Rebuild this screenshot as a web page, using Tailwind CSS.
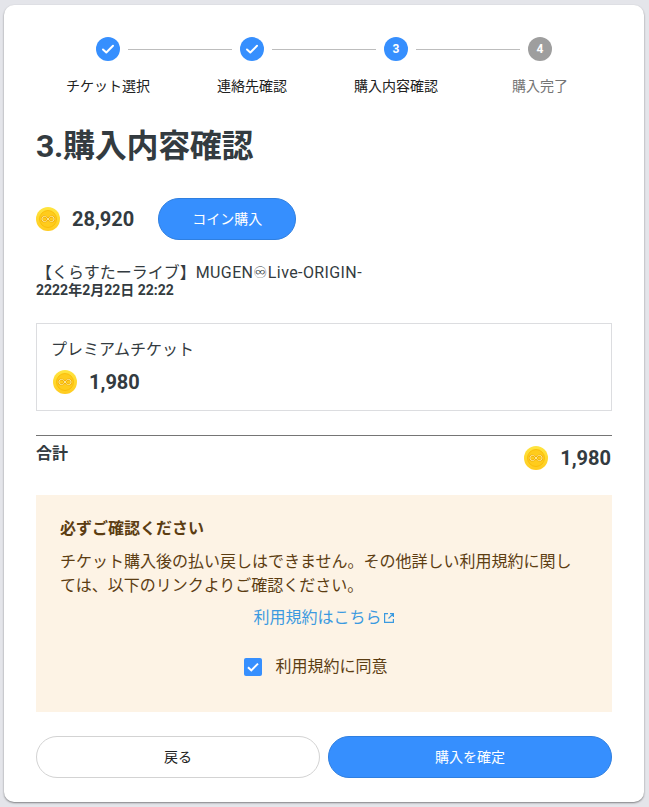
<!DOCTYPE html>
<html lang="ja">
<head>
    <meta charset="UTF-8">
    <meta name="viewport" content="width=device-width, initial-scale=1.0">
    <title>購入内容確認</title>
    <script src="https://cdn.jsdelivr.net/npm/@tailwindcss/browser@4"></script>
</head>
<body class="bg-[#e4e5ea] h-[807px] overflow-hidden font-['Roboto','Noto_Sans_CJK_JP',sans-serif] text-[#333b40]">
    <svg class="absolute w-0 h-0">
        <defs>
            <linearGradient id="coinFace" x1="0" y1="0" x2="0" y2="1">
                <stop offset="0" stop-color="#ffe540"/>
                <stop offset="1" stop-color="#ffcb1f"/>
            </linearGradient>
        </defs>
        <symbol id="coin" viewBox="0 0 24 24">
            <circle cx="12" cy="12" r="12" fill="url(#coinFace)"/>
            <circle cx="12" cy="12" r="8.500" fill="#ffcc1c" stroke="#f7b500" stroke-width=".7"/>
            <path d="M12 12c-1.200-1.700-2.200-2.600-3.500-2.600a2.600 2.600 0 0 0 0 5.200c1.300 0 2.300-.9 3.500-2.600s2.200-2.600 3.500-2.600a2.600 2.600 0 0 1 0 5.200c-1.300 0-2.300-.9-3.500-2.600z" fill="none" stroke="#eea900" stroke-width="2"/>
            <path d="M12 12c-1.200-1.700-2.200-2.600-3.500-2.600a2.600 2.600 0 0 0 0 5.200c1.300 0 2.300-.9 3.500-2.600s2.200-2.600 3.500-2.600a2.600 2.600 0 0 1 0 5.200c-1.300 0-2.300-.9-3.500-2.600z" fill="none" stroke="#ffec9e" stroke-width="1"/>
        </symbol>
    </svg>

    <div class="absolute left-[4px] top-[5px] w-[640px] h-[797px] bg-white rounded-[10px] shadow-[0_1px_2px_rgba(0,0,0,0.45)] px-[32px] pt-[32px]">
        <!-- Stepper -->
        <div class="flex items-center mx-[60px]">
            <div class="w-6 h-6 rounded-full bg-[#368ffe] flex items-center justify-center">
                <svg class="w-[14px] h-[14px]" viewBox="0 0 14 14" fill="none" stroke="#fff" stroke-width="2" stroke-linecap="round" stroke-linejoin="round"><path d="M2 7.500l3.300 3L12 3.800"/></svg>
            </div>
            <div class="flex-1 h-px bg-[#bdbdbd] mx-2"></div>
            <div class="w-6 h-6 rounded-full bg-[#368ffe] flex items-center justify-center">
                <svg class="w-[14px] h-[14px]" viewBox="0 0 14 14" fill="none" stroke="#fff" stroke-width="2" stroke-linecap="round" stroke-linejoin="round"><path d="M2 7.500l3.300 3L12 3.800"/></svg>
            </div>
            <div class="flex-1 h-px bg-[#bdbdbd] mx-2"></div>
            <div class="w-6 h-6 rounded-full bg-[#368ffe] flex items-center justify-center text-white text-xs font-bold">3</div>
            <div class="flex-1 h-px bg-[#bdbdbd] mx-2"></div>
            <div class="w-6 h-6 rounded-full bg-[#9e9e9e] flex items-center justify-center text-white text-xs font-bold">4</div>
        </div>
        <div class="grid grid-cols-4 text-center text-sm leading-5 mt-[15px] text-[#212121]">
            <div>チケット選択</div>
            <div>連絡先確認</div>
            <div>購入内容確認</div>
            <div class="text-[#757575]">購入完了</div>
        </div>

        <h1 class="text-[32px] leading-[40px] font-bold tracking-[-0.3px] mt-[30px]">3.購入内容確認</h1>

        <!-- Coin balance -->
        <div class="flex items-center mt-[32px] h-[42px]">
            <svg class="w-6 h-6"><use href="#coin"/></svg>
            <span class="text-xl font-bold ml-3">28,920</span>
            <button class="ml-6 w-[138px] h-[42px] rounded-full bg-[#368ffe] border border-[#2f7fe0] text-white text-sm">コイン購入</button>
        </div>

        <!-- Event -->
        <p class="text-base leading-5 mt-[23px]">【くらすたーライブ】<span class="tracking-[0.4px]">MUGEN♾Live-ORIGIN-</span></p>
        <p class="text-sm leading-[14px] font-bold">2222年2月22日 22:22</p>

        <!-- Ticket -->
        <div class="border border-[#dcdde0] h-[88px] mt-[26px] px-[14px] pt-[14px]">
            <div class="text-base leading-6">プレミアムチケット</div>
            <div class="flex items-center mt-[8px]">
                <svg class="w-6 h-6 mr-3 ml-[2px]"><use href="#coin"/></svg>
                <span class="text-xl leading-6 font-bold">1,980</span>
            </div>
        </div>

        <!-- Total -->
        <div class="flex justify-between border-t border-[#757575] mt-6 pt-[8px]">
            <span class="text-base leading-5 font-bold">合計</span>
            <div class="flex items-center pt-[2px] pr-px">
                <svg class="w-6 h-6 mr-3"><use href="#coin"/></svg>
                <span class="text-xl leading-6 font-bold">1,980</span>
            </div>
        </div>

        <!-- Notice -->
        <div class="bg-[#fdf3e5] h-[217px] mt-[25px] px-6 pt-[23px] text-[#5c3d12]">
            <div class="text-base leading-[22px] font-bold">必ずご確認ください</div>
            <p class="text-base leading-6 mt-[10px] pr-1">チケット購入後の払い戻しはできません。その他詳しい利用規約に関しては、以下のリンクよりご確認ください。</p>
            <div class="flex justify-center items-center text-base leading-6 text-[#3b9ae0] mt-[8px]">
                利用規約はこちら
                <svg class="w-3 h-3 ml-px" viewBox="0 0 12 12" fill="none" stroke="currentColor" stroke-width="1.200"><path d="M5 1.600H1.600v8.800h8.800V7M7 1.600h3.400V5M10.400 1.600L5.500 6.500"/></svg>
            </div>
            <label class="flex justify-center items-center mt-[25px] pr-4 leading-6 text-base">
                <span class="w-[18px] h-[18px] rounded-[2px] bg-[#368ffe] flex items-center justify-center mr-[13px]">
                    <svg class="w-[14px] h-[14px]" viewBox="0 0 14 14" fill="none" stroke="#fff" stroke-width="2"><path d="M2 7.200l3.300 3.200L12 3.600"/></svg>
                </span>
                利用規約に同意
            </label>
        </div>

        <!-- Actions -->
        <div class="grid grid-cols-2 gap-2 mt-[24px]">
            <button class="h-[42px] rounded-full bg-white border border-[#d3d3d3] text-sm text-[#212121]">戻る</button>
            <button class="h-[42px] rounded-full bg-[#368ffe] border border-[#2f7fe0] text-sm text-white">購入を確定</button>
        </div>
    </div>
</body>
</html>
